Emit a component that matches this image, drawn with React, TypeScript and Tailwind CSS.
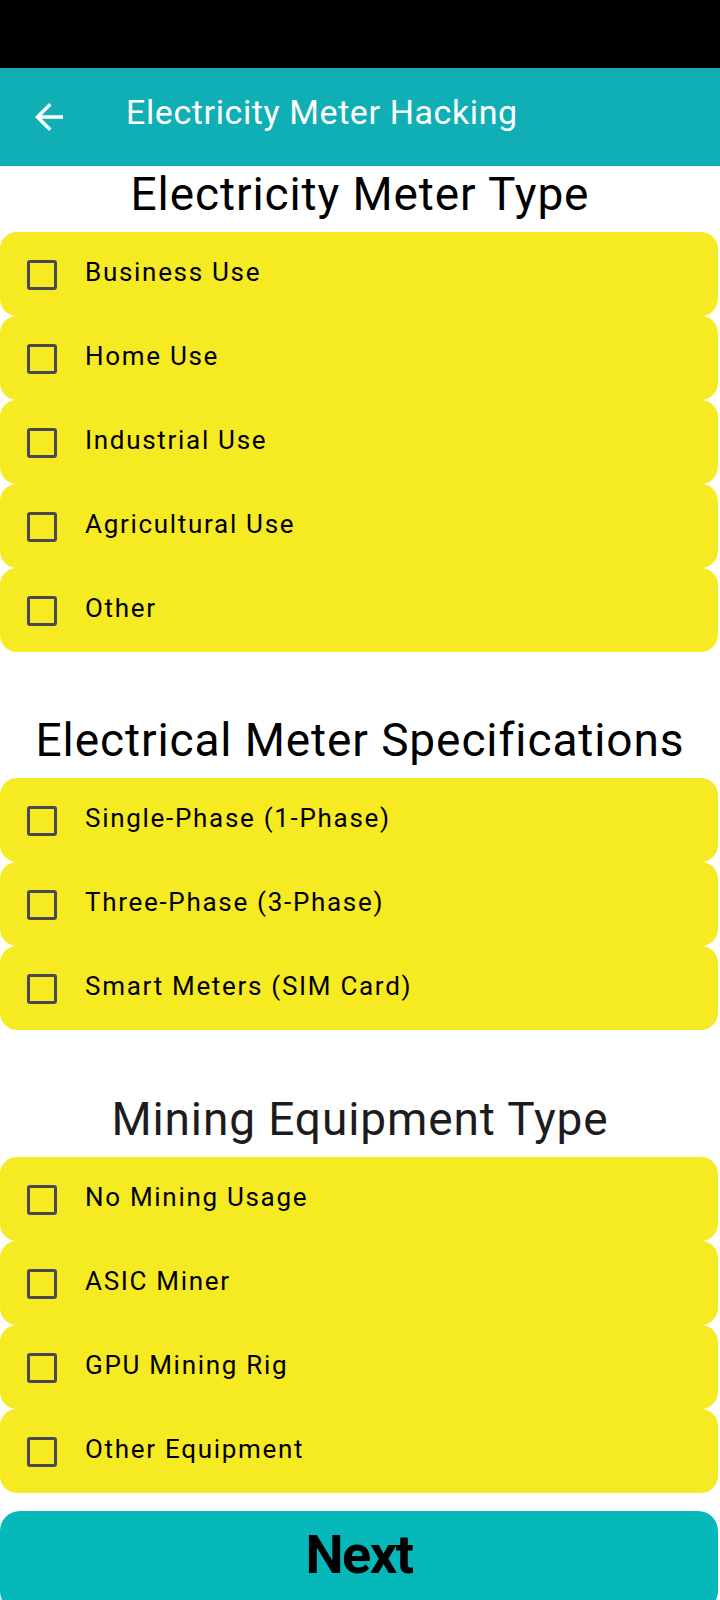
import { useState } from 'react';

const sections = [
  {
    title: 'Electricity Meter Type',
    tone: 'text-black',
    gap: 'pt-[1px]',
    items: ['Business Use', 'Home Use', 'Industrial Use', 'Agricultural Use', 'Other'],
  },
  {
    title: 'Electrical Meter Specifications',
    tone: 'text-black',
    gap: 'pt-[61px]',
    items: ['Single-Phase (1-Phase)', 'Three-Phase (3-Phase)', 'Smart Meters (SIM Card)'],
  },
  {
    title: 'Mining Equipment Type',
    tone: 'text-[#1d1b20]',
    gap: 'pt-[62px]',
    items: ['No Mining Usage', 'ASIC Miner', 'GPU Mining Rig', 'Other Equipment'],
  },
];

function OptionRow({ label }: { label: string }) {
  const [checked, setChecked] = useState(false);
  return (
    <label className="flex h-[84px] w-[718px] cursor-pointer items-center gap-[28px] rounded-[17px] bg-[#f6ea22] pl-[27px]">
      <span
        onClick={() => setChecked(!checked)}
        className={`mt-[2px] h-[30px] w-[30px] shrink-0 rounded-[3px] border-[3px] border-[#4a4850] ${
          checked ? 'bg-[#4a4850]' : ''
        }`}
      />
      <span className="mb-[4px] text-[26px] leading-none tracking-[1.7px] text-black">{label}</span>
    </label>
  );
}

export default function App() {
  return (
    <div className="flex min-h-[1600px] w-[720px] flex-col overflow-hidden bg-white" style={{ fontFamily: 'Roboto, "Liberation Sans", sans-serif' }}>
      {/* Status bar */}
      <div className="h-[68px] bg-black" />

      {/* App bar */}
      <header className="flex h-[98px] items-center gap-[56px] bg-[#10afb6] pl-[28px]">
        <button className="flex h-[42px] w-[42px] items-center justify-center text-white" aria-label="Back">
          <svg viewBox="0 0 24 24" width="42" height="42" fill="currentColor">
            <path d="M20 11H7.83l5.59-5.59L12 4l-8 8 8 8 1.41-1.41L7.83 13H20v-2z" />
          </svg>
        </button>
        <h1 className="mb-[10px] text-[34px] font-normal tracking-[0.6px] text-white">Electricity Meter Hacking</h1>
      </header>

      {sections.map((section) => (
        <section key={section.title} className={`flex flex-col gap-[11px] ${section.gap}`}>
          <h2 className={`text-center text-[46px] leading-[54px] font-normal tracking-[0.9px] ${section.tone}`}>
            {section.title}
          </h2>
          <div className="flex flex-col">
            {section.items.map((item) => (
              <OptionRow key={item} label={item} />
            ))}
          </div>
        </section>
      ))}

      <div className="pt-[18px]">
        <button className="flex h-[100px] w-[718px] justify-center rounded-[20px] bg-[#07b8ba] pt-[12px]">
          <span className="text-[54px] leading-[63px] font-bold tracking-[-1.5px] text-black">Next</span>
        </button>
      </div>
    </div>
  );
}
